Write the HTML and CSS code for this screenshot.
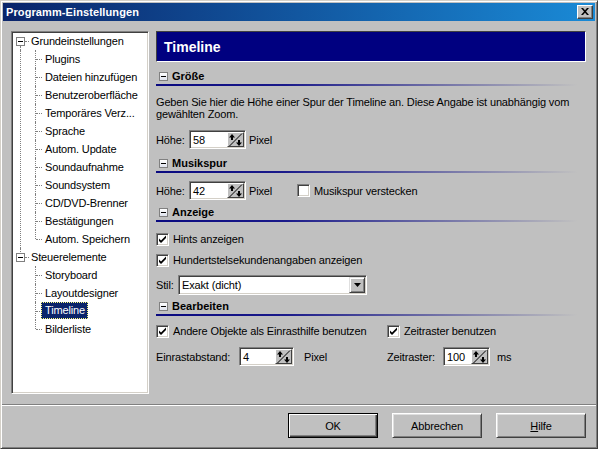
FILE: index.html
```html
<!DOCTYPE html>
<html lang="de">
<head>
<meta charset="utf-8">
<title>Programm-Einstellungen</title>
<link rel="stylesheet" href="styles.css">
</head>
<body>
<div class="window">
  <div class="titlebar">
    <span class="title">Programm-Einstellungen</span>
    <span class="close"><svg width="8" height="7" viewBox="0 0 8 7"><path d="M0 0h2l2 2.2L6 0h2L5 3.5 8 7H6L4 4.8 2 7H0l3-3.5z" fill="#000"/></svg></span>
  </div>
  <div class="main">
    <div class="tree">
      <div class="node root first"><span class="tog"></span><span class="stub"></span><span class="ntext">Grundeinstellungen</span></div>
      <div class="group cont">
        <div class="node child">Plugins</div>
        <div class="node child">Dateien hinzufügen</div>
        <div class="node child">Benutzeroberfläche</div>
        <div class="node child">Temporäres Verz...</div>
        <div class="node child">Sprache</div>
        <div class="node child">Autom. Update</div>
        <div class="node child">Soundaufnahme</div>
        <div class="node child">Soundsystem</div>
        <div class="node child">CD/DVD-Brenner</div>
        <div class="node child">Bestätigungen</div>
        <div class="node child last">Autom. Speichern</div>
      </div>
      <div class="node root lastroot"><span class="tog"></span><span class="stub"></span><span class="ntext">Steuerelemente</span></div>
      <div class="group">
        <div class="node child">Storyboard</div>
        <div class="node child">Layoutdesigner</div>
        <div class="node child sel"><span class="selbox">Timeline</span></div>
        <div class="node child last">Bilderliste</div>
      </div>
    </div>
    <div class="panel">
      <div class="header">Timeline</div>

      <div class="sec s1"><span class="tog"></span>Größe</div>
      <p class="desc">Geben Sie hier die Höhe einer Spur der Timeline an. Diese Angabe ist unabhängig vom<br>gewählten Zoom.</p>
      <div class="row r1">
        <span class="w-hoehe">Höhe:</span>
        <span class="spin w57"><span class="val">58</span><span class="spinbtn"><svg width="15" height="14" viewBox="0 0 15 14"><path d="M1 13.5L14 0.5" stroke="#000" stroke-width="1"/><path d="M4 1L1 4.5h2V7h2V4.5h2z" fill="#000"/><path d="M11 13l3-3.5h-2V7h-2v2.5H8z" fill="#000"/></svg></span></span>
        <span class="unit">Pixel</span>
      </div>

      <div class="sec s2"><span class="tog"></span>Musikspur</div>
      <div class="row r2">
        <span class="w-hoehe">Höhe:</span>
        <span class="spin w57"><span class="val">42</span><span class="spinbtn"><svg width="15" height="14" viewBox="0 0 15 14"><path d="M1 13.5L14 0.5" stroke="#000" stroke-width="1"/><path d="M4 1L1 4.5h2V7h2V4.5h2z" fill="#000"/><path d="M11 13l3-3.5h-2V7h-2v2.5H8z" fill="#000"/></svg></span></span>
        <span class="unit w-pixel2">Pixel</span>
        <span class="cbl"><span class="cb"></span>Musikspur verstecken</span>
      </div>

      <div class="sec s3"><span class="tog"></span>Anzeige</div>
      <div class="crow c1"><span class="cbl"><span class="cb"><svg width="9" height="9" viewBox="0 0 9 9"><path d="M1 3.5l2 2 5-5v2.5l-5 5-2-2z" fill="#000"/></svg></span>Hints anzeigen</span></div>
      <div class="crow c2"><span class="cbl"><span class="cb"><svg width="9" height="9" viewBox="0 0 9 9"><path d="M1 3.5l2 2 5-5v2.5l-5 5-2-2z" fill="#000"/></svg></span>Hundertstelsekundenangaben anzeigen</span></div>
      <div class="row r3">
        <span class="w-stil">Stil:</span>
        <span class="select"><span class="val">Exakt (dicht)</span><span class="dropbtn"><svg width="7" height="4" viewBox="0 0 7 4"><path d="M0 0h7L3.5 4z" fill="#000"/></svg></span></span>
      </div>

      <div class="sec s4"><span class="tog"></span>Bearbeiten</div>
      <div class="crow c3">
        <span class="cbl w-andere"><span class="cb"><svg width="9" height="9" viewBox="0 0 9 9"><path d="M1 3.5l2 2 5-5v2.5l-5 5-2-2z" fill="#000"/></svg></span>Andere Objekte als Einrasthilfe benutzen</span>
        <span class="cbl"><span class="cb"><svg width="9" height="9" viewBox="0 0 9 9"><path d="M1 3.5l2 2 5-5v2.5l-5 5-2-2z" fill="#000"/></svg></span>Zeitraster benutzen</span>
      </div>
      <div class="row r4">
        <span class="w-einrast">Einrastabstand:</span>
        <span class="spin w55"><span class="val">4</span><span class="spinbtn"><svg width="15" height="14" viewBox="0 0 15 14"><path d="M1 13.5L14 0.5" stroke="#000" stroke-width="1"/><path d="M4 1L1 4.5h2V7h2V4.5h2z" fill="#000"/><path d="M11 13l3-3.5h-2V7h-2v2.5H8z" fill="#000"/></svg></span></span>
        <span class="unit2">Pixel</span>
        <span class="w-zeit">Zeitraster:</span>
        <span class="spin w47"><span class="val">100</span><span class="spinbtn"><svg width="15" height="14" viewBox="0 0 15 14"><path d="M1 13.5L14 0.5" stroke="#000" stroke-width="1"/><path d="M4 1L1 4.5h2V7h2V4.5h2z" fill="#000"/><path d="M11 13l3-3.5h-2V7h-2v2.5H8z" fill="#000"/></svg></span></span>
        <span class="unit3">ms</span>
      </div>
    </div>
  </div>
  <div class="sep"></div>
  <div class="buttons">
    <button class="btn default">OK</button>
    <button class="btn">Abbrechen</button>
    <button class="btn"><u>H</u>ilfe</button>
  </div>
</div>
</body>
</html>
```
FILE: styles.css
```css
* { box-sizing: border-box; }
body {
  margin: 0;
  font-family: "Liberation Sans", Arial, sans-serif;
  font-size: 11px;
  letter-spacing: -0.15px;
  color: #000;
  background: #c0c0c0;
}
.window {
  width: 598px;
  height: 449px;
  background: #c0c0c0;
  border: 1px solid;
  border-color: #d4d0c8 #404040 #404040 #d4d0c8;
  box-shadow: inset 1px 1px #fff, inset -1px -1px #808080;
  padding: 2px;
  display: flex;
  flex-direction: column;
}
.titlebar {
  flex: none;
  height: 18px;
  background: linear-gradient(to right, #0a246a, #1a8ad6);
  display: flex;
  align-items: center;
  justify-content: space-between;
  padding: 0 2px 0 3px;
}
.title {
  color: #fff;
  font-weight: bold;
  font-size: 11px;
  letter-spacing: 0.1px;
}
.close {
  width: 16px;
  height: 14px;
  background: #c0c0c0;
  border: 1px solid;
  border-color: #fff #404040 #404040 #fff;
  box-shadow: inset -1px -1px #808080;
  display: flex;
  align-items: center;
  justify-content: center;
  padding-bottom: 1px;
  padding-right: 1px;
}
.close svg { display: block; }

.main {
  display: flex;
  margin: 10px 0 0 8px;
}
.tree {
  width: 138px;
  height: 363px;
  background: #fff;
  border: 1px solid;
  border-color: #808080 #fff #fff #808080;
  box-shadow: inset 1px 1px #404040, inset -1px -1px #d4d0c8;
  padding: 0 0 0 1px;
}
.node {
  position: relative;
  height: 18px;
  line-height: 18px;
  white-space: nowrap;
}
.node.root {
  display: flex;
  align-items: center;
  padding-left: 3px;
}
.tog {
  flex: none;
  width: 9px;
  height: 9px;
  border: 1px solid #808080;
  background: #fff;
  position: relative;
}
.tog::after {
  content: "";
  position: absolute;
  left: 1px;
  top: 3px;
  width: 5px;
  height: 1px;
  background: #000;
}
.stub {
  width: 4px;
  border-top: 1px dotted #808080;
}
.ntext { margin-left: 2px; }
.root.first::before {
  content: "";
  position: absolute;
  left: 7px;
  top: 14px;
  height: 4px;
  border-left: 1px dotted #808080;
}
.root.lastroot::before {
  content: "";
  position: absolute;
  left: 7px;
  top: 0;
  height: 4px;
  border-left: 1px dotted #808080;
}
.group { position: relative; }
.group.cont::before {
  content: "";
  position: absolute;
  left: 7px;
  top: 0;
  bottom: 0;
  border-left: 1px dotted #808080;
}
.node.child { padding-left: 32px; }
.node.child::before {
  content: "";
  position: absolute;
  left: 22px;
  top: 0;
  height: 18px;
  border-left: 1px dotted #808080;
}
.node.child.last::before { height: 9px; }
.node.child::after {
  content: "";
  position: absolute;
  left: 23px;
  top: 9px;
  width: 6px;
  border-top: 1px dotted #808080;
}
.node.sel { padding-left: 28px; }
.selbox {
  display: inline-block;
  line-height: 15px;
  background: #0a246a;
  color: #fff;
  border: 1px dotted #ffff80;
  padding: 0 2px 0 3px;
  vertical-align: top;
  margin-top: 0;
}

.panel {
  width: 430px;
  margin-left: 7px;
  display: flex;
  flex-direction: column;
}
.header {
  height: 31px;
  background: #000080;
  border: 1px solid;
  border-color: #404040 #fff #fff #404040;
  color: #fff;
  font-weight: bold;
  font-size: 14px;
  letter-spacing: 0;
  padding-left: 7px;
  display: flex;
  align-items: center;
}
.sec {
  height: 18px;
  padding: 0 0 2px 3px;
  display: flex;
  align-items: center;
  gap: 4px;
  font-weight: bold;
  letter-spacing: 0;
  background: linear-gradient(to right, #0a0a80, #1a1a8a 30%, #c0c0c0 98%) left bottom / 100% 2px no-repeat;
}
.sec .tog { background: linear-gradient(#ffffff, #dfe3ee); }
.s1 { margin-top: 6px; }
.s2 { margin-top: 6px; }
.s3 { margin-top: 4px; }
.s4 { margin-top: 3px; }
.desc {
  margin: 10px 0 0;
  line-height: 12px;
  white-space: nowrap;
}
.row {
  display: flex;
  align-items: center;
  height: 19px;
  white-space: nowrap;
}
.r1 { margin-top: 10px; }
.r2 { margin-top: 8px; }
.r3 { margin-top: 6px; height: 20px; }
.r4 { margin-top: 7px; }
.crow {
  display: flex;
  align-items: center;
  height: 18px;
  white-space: nowrap;
}
.c1 { margin-top: 8px; }
.c2 { margin-top: 3px; }
.c3 { margin-top: 6px; }

.w-hoehe { width: 33px; }
.w-stil { width: 22px; }
.w-einrast { width: 83px; }
.w-zeit { width: 56px; }
.w-andere { width: 231px; }
.unit { margin-left: 3px; }
.w-pixel2 { width: 48px; }
.unit2 { margin-left: 10px; width: 83px; }
.unit3 { margin-left: 7px; }

.spin {
  height: 19px;
  background: #fff;
  border: 1px solid;
  border-color: #808080 #fff #fff #808080;
  box-shadow: inset 1px 1px #404040, inset -1px -1px #d4d0c8;
  display: flex;
  align-items: center;
  padding: 1px 1px 1px 3px;
}
.w57 { width: 57px; }
.w55 { width: 55px; }
.w47 { width: 47px; }
.spin .val { flex: 1; }
.spinbtn {
  flex: none;
  width: 17px;
  height: 15px;
  background: #c0c0c0;
  border: 1px solid;
  border-color: #fff #404040 #404040 #fff;
  display: flex;
  align-items: center;
  justify-content: center;
  overflow: hidden;
}
.spinbtn svg { display: block; }

.cbl {
  display: flex;
  align-items: center;
  gap: 4px;
}
.cb {
  flex: none;
  width: 13px;
  height: 13px;
  background: #fff;
  border: 1px solid;
  border-color: #808080 #fff #fff #808080;
  box-shadow: inset 1px 1px #404040, inset -1px -1px #d4d0c8;
  display: flex;
  align-items: center;
  justify-content: center;
}
.cb svg { display: block; }

.select {
  width: 189px;
  height: 20px;
  background: #fff;
  border: 1px solid;
  border-color: #808080 #fff #fff #808080;
  box-shadow: inset 1px 1px #404040, inset -1px -1px #d4d0c8;
  display: flex;
  align-items: center;
  padding: 1px 1px 1px 3px;
}
.select .val { flex: 1; }
.dropbtn {
  width: 16px;
  height: 16px;
  background: #c0c0c0;
  border: 1px solid;
  border-color: #dfdfdf #404040 #404040 #dfdfdf;
  box-shadow: inset 1px 1px #fff, inset -1px -1px #808080;
  display: flex;
  align-items: center;
  justify-content: center;
}
.dropbtn svg { display: block; }

.sep {
  margin: 10px -1px 0;
  height: 2px;
  border-top: 1px solid #808080;
  border-bottom: 1px solid #fff;
}
.buttons {
  display: flex;
  justify-content: flex-end;
  gap: 14px;
  margin-top: 7px;
  padding-right: 9px;
}
.btn {
  width: 90px;
  height: 25px;
  margin: 0;
  padding: 0;
  font-family: "Liberation Sans", Arial, sans-serif;
  font-size: 11px;
  letter-spacing: -0.15px;
  color: #000;
  background: #c0c0c0;
  border: 1px solid;
  border-color: #fff #404040 #404040 #fff;
  box-shadow: inset 1px 1px #dfdfdf, inset -1px -1px #808080;
}
.btn.default {
  border: 1px solid #000;
  box-shadow: inset 1px 1px #fff, inset -1px -1px #404040, inset -2px -2px #808080;
}
```
